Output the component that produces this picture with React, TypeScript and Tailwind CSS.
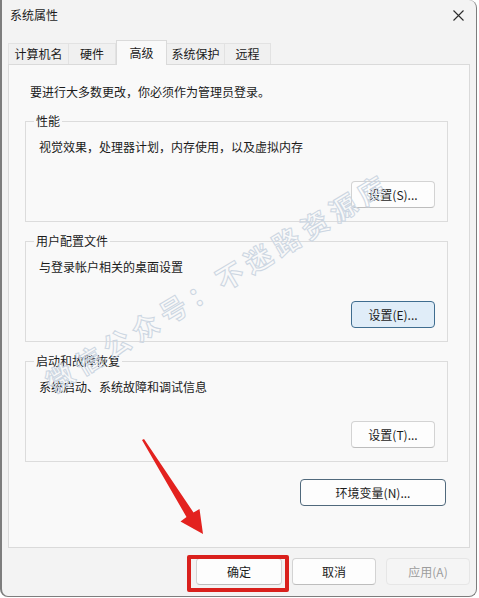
const Tab = ({ label, w, active }: { label: string; w: string; active?: boolean }) => {
  if (active) {
    return (
      <div
        className={`${w} h-[25px] -mb-px relative z-10 flex items-start justify-center pt-[3px] bg-[#f9f9f9] border border-b-0 border-[#dadada] text-[12px]`}
      >
        {label}
      </div>
    );
  }
  return (
    <div
      className={`${w} h-[21px] flex items-center justify-center bg-[#f0f0f0] border border-b-0 border-l-0 first:border-l border-[#e2e2e2] text-[12px]`}
    >
      {label}
    </div>
  );
};

const Btn = ({ label, kind, w }: { label: string; kind?: "focus" | "default" | "disabled"; w: string }) => {
  let cls = "bg-[#fdfdfd] border-[#d3d3d3] border-b-[#bdbdbd] text-[#1b1b1b]";
  if (kind === "focus") cls = "bg-[#e0edf8] border-[#3f6d8f] text-[#1b1b1b]";
  if (kind === "default") cls = "bg-[#fdfdfd] border-[#50697c] text-[#1b1b1b]";
  if (kind === "disabled") cls = "bg-[#f5f5f5] border-[#e6e6e6] text-[#9d9d9d]";
  return (
    <button className={`${w} h-[27px] rounded-[4px] border text-[12px] flex items-center justify-center ${cls}`}>
      {label}
    </button>
  );
};

const Group = ({ title, desc, btn, focus }: { title: string; desc: string; btn: string; focus?: boolean }) => {
  return (
    <fieldset className="ml-[16px] w-[423px] border border-[#dcdcdc] px-[12px] pb-[13px]">
      <legend className="ml-[-4px] px-[2px] text-[12px] leading-[16px]">{title}</legend>
      <p className="mt-[10px] ml-[1px] text-[12px] leading-[16px]">{desc}</p>
      <div className="mt-[26px] flex justify-end">
        <Btn label={btn} w="w-[84px]" kind={focus ? "focus" : undefined} />
      </div>
    </fieldset>
  );
};

export default function App() {
  return (
    <div className="relative w-[479px] h-[598px] bg-white overflow-hidden font-['Noto_Sans_CJK_SC','Microsoft_YaHei',sans-serif] text-[#1b1b1b]">
      <div className="w-[477px] h-[597px] bg-[#f3f3f3] border-l-2 border-r border-b border-[#7d7d7d] rounded-tr-[8px] rounded-b-[8px] flex flex-col">
        {/* title bar */}
        <div className="h-[30px] flex items-center justify-between pl-[8px] pr-[10px]">
          <span className="text-[12px]">系统属性</span>
          <svg width="11" height="11" viewBox="0 0 11 11" className="mr-[2px]">
            <path d="M0.5 0.5L10.5 10.5M10.5 0.5L0.5 10.5" stroke="#2b2b2b" strokeWidth="1.1" />
          </svg>
        </div>

        {/* tabs */}
        <div className="mt-[10px] pl-[6px] flex items-end">
          <Tab label="计算机名" w="w-[61px]" />
          <Tab label="硬件" w="w-[47px]" />
          <Tab label="高级" w="w-[51px]" active />
          <Tab label="系统保护" w="w-[58px]" />
          <Tab label="远程" w="w-[46px]" />
        </div>

        {/* tab panel */}
        <div className="ml-[6px] w-[462px] h-[484px] bg-[#f9f9f9] border border-[#dadada]">
          <p className="mt-[19px] ml-[21px] text-[12px] leading-[16px]">要进行大多数更改，你必须作为管理员登录。</p>
          <div className="mt-[13px] flex flex-col gap-[11px]">
            <Group title="性能" desc="视觉效果，处理器计划，内存使用，以及虚拟内存" btn="设置(S)..." />
            <Group title="用户配置文件" desc="与登录帐户相关的桌面设置" btn="设置(E)..." focus />
            <Group title="启动和故障恢复" desc="系统启动、系统故障和调试信息" btn="设置(T)..." />
          </div>
          <div className="mt-[17px] ml-[291px]">
            <Btn label="环境变量(N)..." w="w-[146px]" kind="default" />
          </div>
        </div>

        {/* bottom buttons */}
        <div className="mt-[10px] pr-[6px] flex justify-end gap-[10px]">
          <Btn label="确定" w="w-[86px]" />
          <Btn label="取消" w="w-[84px]" />
          <Btn label="应用(A)" w="w-[84px]" kind="disabled" />
        </div>
      </div>

      {/* watermark */}
      <div className="absolute left-[8px] top-[262px] w-[420px] text-center -rotate-[31deg] pointer-events-none text-[27px] font-bold tracking-[6px] text-transparent [-webkit-text-stroke:1px_#ccd6e2]">
        微信公众号：不迷路资源库
      </div>

      {/* annotation: red frame */}
      <div className="absolute left-[187px] top-[555px] w-[102px] h-[37px] border-[4px] border-[#d9201c] rounded-[2px] pointer-events-none" />

      {/* annotation: red arrow */}
      <svg className="absolute left-0 top-0 pointer-events-none" width="479" height="598" viewBox="0 0 479 598">
        <polygon points="142,440 144,439 193.5,512.5 199.5,509 203,534 180.5,521.5 186.5,517" fill="#e3221f" />
      </svg>
    </div>
  );
}
